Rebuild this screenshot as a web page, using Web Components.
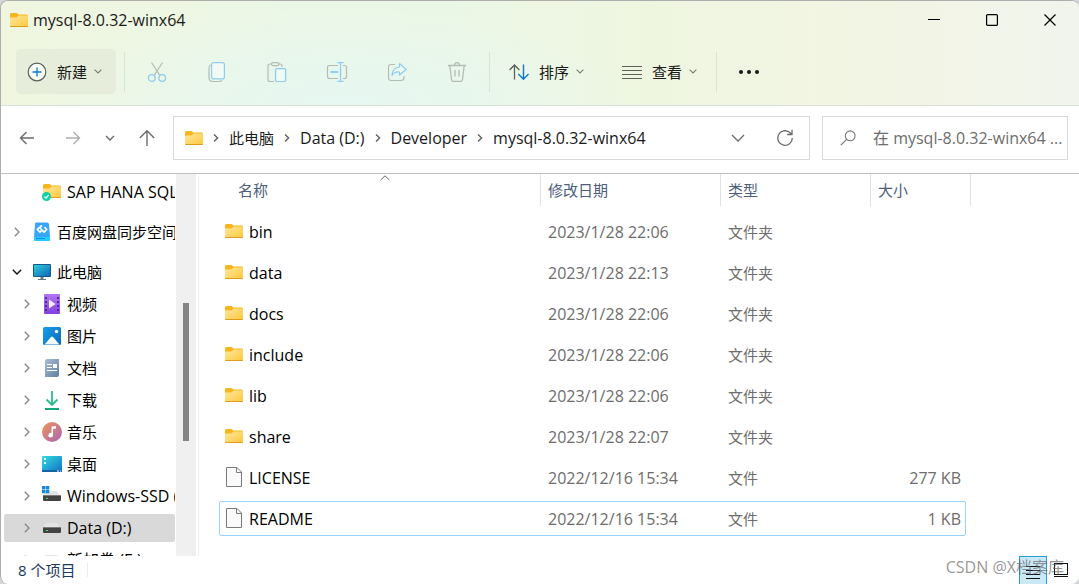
<!DOCTYPE html>
<html lang="zh-CN">
<head>
<meta charset="utf-8">
<title>mysql-8.0.32-winx64</title>
<style>
html, body { margin: 0; height: 100%; }
body {
  background: #d4d6da;
  color: #1a1a1a;
  font: 16px/20px "Open Sans", "Noto Sans CJK SC", sans-serif;
  --cjk: 15px;
  --line: #d9d9d9;
}
</style>
</head>
<body>
<fx-window>
  <fx-title-bar slot="top">mysql-8.0.32-winx64</fx-title-bar>
  <fx-toolbar slot="top">
    <fx-tool-button icon="new" filled>新建</fx-tool-button>
    <fx-separator></fx-separator>
    <fx-icon-group></fx-icon-group>
    <fx-separator></fx-separator>
    <fx-tool-button icon="sort">排序</fx-tool-button>
    <fx-tool-button icon="view">查看</fx-tool-button>
    <fx-separator></fx-separator>
    <fx-more-button></fx-more-button>
  </fx-toolbar>
  <fx-address-row slot="address">
    <fx-crumb>此电脑</fx-crumb>
    <fx-crumb latin>Data (D:)</fx-crumb>
    <fx-crumb latin>Developer</fx-crumb>
    <fx-crumb latin last>mysql-8.0.32-winx64</fx-crumb>
  </fx-address-row>
  <fx-nav-pane slot="nav">
    <fx-nav-item icon="synced" level="2" leaf spaced latin>SAP HANA SQL</fx-nav-item>
    <fx-nav-item icon="baidu" level="1" spaced>百度网盘同步空间</fx-nav-item>
    <fx-nav-item icon="pc" level="1" open>此电脑</fx-nav-item>
    <fx-nav-item icon="video" level="2">视频</fx-nav-item>
    <fx-nav-item icon="picture" level="2">图片</fx-nav-item>
    <fx-nav-item icon="document" level="2">文档</fx-nav-item>
    <fx-nav-item icon="download" level="2">下载</fx-nav-item>
    <fx-nav-item icon="music" level="2">音乐</fx-nav-item>
    <fx-nav-item icon="desktop" level="2">桌面</fx-nav-item>
    <fx-nav-item icon="system" level="2" latin>Windows-SSD (C:)</fx-nav-item>
    <fx-nav-item icon="drive" level="2" latin selected>Data (D:)</fx-nav-item>
    <fx-nav-item icon="drive" level="2" latin>新加卷 (E:)</fx-nav-item>
  </fx-nav-pane>
  <fx-file-list slot="files"></fx-file-list>
  <fx-status-bar slot="status">8 个项目</fx-status-bar>
</fx-window>

<script>
const svg = (w, h, body) =>
  `<svg width="${w}" height="${h}" viewBox="0 0 ${w} ${h}" fill="none" aria-hidden="true">${body}</svg>`;
const folderBody = `
  <defs><linearGradient id="f" x1="0" y1="0" x2="1" y2="1"><stop stop-color="#ffe7a0"/><stop offset="1" stop-color="#fdc93b"/></linearGradient></defs>
  <path d="M0 1.5Q0 0 1.5 0H6.5L8.5 1.500H16.5Q18 1.500 18 3V8H0Z" fill="#f8b51c"/>
  <path d="M0 4.500H6.500L8.500 2.500H17Q18 2.500 18 3.500V13Q18 14 17 14H1Q0 14 0 13Z" fill="url(#f)"/>
  <path d="M0 12.500Q0 14 1 14H17Q18 14 18 12.500Q18 13 17 13H1Q0 13 0 12.500Z" fill="#e09a1c"/>`;
const driveBody = `<path d="M4 5H15L18 10H1Z" fill="#e2e4e6"/><rect x="1" y="9" width="18" height="6" rx="1" fill="#434343"/><rect x="1" y="9" width="18" height="1" fill="#7b7b7b"/><rect x="4" y="12" width="2" height="1" fill="#48e060"/>`;

const ICONS = {
  folder: svg(18, 14, folderBody),
  file: svg(16, 20, `<path d="M.5.5H11L15.500 5V19.500H.5Z" fill="#fafafa" stroke="#7a7a7a"/><path d="M10.500.5V5.500H15.500" stroke="#7a7a7a"/>`),
  new: svg(20, 20, `<circle cx="10" cy="10" r="8.800" fill="#fafcf8" stroke="#5c605a" stroke-width="1.200"/><path d="M10 5.500V14.500M5.500 10H14.500" stroke="#0a7ad0" stroke-width="1.300"/>`),
  cut: svg(20, 20, `<path d="M4.500.5 12.800 13.300M15.500.5 7.200 13.300" stroke="#b5bcb3" stroke-width="1.200"/><circle cx="4.800" cy="16" r="3.300" stroke="#8fcdef" stroke-width="1.300"/><circle cx="15.200" cy="16" r="3.300" stroke="#8fcdef" stroke-width="1.300"/>`),
  copy: svg(20, 20, `<path d="M4 3Q2 3.500 2 6V15.500Q2 19.500 6 19.500H12Q14 19.500 14.800 18" stroke="#b5bcb3" stroke-width="1.200"/><rect x="4.600" y=".6" width="12.800" height="16.300" rx="2" fill="#f0faf6" stroke="#8fcdef" stroke-width="1.200"/>`),
  paste: svg(20, 20, `<path d="M7 19.500H3Q1 19.500 1 17.500V4Q1 2 3 2H13Q15 2 15 4V5" stroke="#b5bcb3" stroke-width="1.200"/><rect x="4.500" y=".6" width="7.500" height="3" rx="1.500" fill="#ebf7ea" stroke="#b5bcb3" stroke-width="1.200"/><rect x="8.600" y="6.600" width="10" height="13" rx="1.500" fill="#f0faf6" stroke="#8fcdef" stroke-width="1.300"/>`),
  rename: svg(22, 20, `<path d="M12 3.500H3.500Q1.500 3.500 1.500 5.500V14.500Q1.500 16.500 3.500 16.500H12M17 3.500H18.500Q20.500 3.500 20.500 5.500V14.500Q20.500 16.500 18.500 16.500H17" stroke="#b5bcb3" stroke-width="1.200"/><path d="M11.500.6H17.500M11.500 19.400H17.500M14.500.6V19.400" stroke="#8fcdef" stroke-width="1.300"/><path d="M4.500 10H12" stroke="#8fcdef" stroke-width="2"/>`),
  share: svg(20, 20, `<path d="M8 2.500H4Q1.500 2.500 1.500 5V15.500Q1.500 18.500 4 18.500H14Q17 18.500 17 15.500V14" stroke="#b5bcb3" stroke-width="1.200"/><path d="M12.500 1.500 19 7.500 12.500 13V10Q7.500 9.500 5 13.500Q5.500 5.500 12.500 5Z" fill="#eef9ef" stroke="#8fcdef" stroke-width="1.200" stroke-linejoin="round"/>`),
  trash: svg(20, 20, `<path d="M1 3.500H19M7.500 3.500Q7.500.7 10 .7T12.500 3.500M2.800 3.500 4.500 17.500Q4.800 19.400 6.500 19.400H13.500Q15.200 19.400 15.500 17.500L17.200 3.500M8 8V14.500M12 8V14.500" stroke="#b5bcb3" stroke-width="1.300"/>`),
  sort: svg(20, 18, `<path d="M5.500 16.500V2M.6 7 5.500 2 10.400 7" stroke="#5c605a" stroke-width="1.300"/><path d="M14.500 1.500V16M9.300 11 14.500 16.200 19.600 11" stroke="#0a7ad0" stroke-width="1.400"/>`),
  view: svg(20, 14, `<path d="M0 1.500H20M0 5.500H20M0 9.500H20M0 13.500H20" stroke="#5c605a"/>`),
  more: svg(20, 4, `<circle cx="2" cy="2" r="2" fill="#1a1a1a"/><circle cx="10" cy="2" r="2" fill="#1a1a1a"/><circle cx="18" cy="2" r="2" fill="#1a1a1a"/>`),
  down: svg(8, 5, `<path d="M.6.6 4 4 7.400.6" stroke="#7a7d77" stroke-width="1.100"/>`),
  min: svg(12, 12, `<path d="M0 5.500H12" stroke="#000"/>`),
  max: svg(12, 12, `<rect x=".6" y=".6" width="10.800" height="10.800" rx="1" stroke="#000" stroke-width="1.200"/>`),
  close: svg(12, 12, `<path d="M.5.5 11.500 11.500M11.500.5.5 11.500" stroke="#000" stroke-width="1.200"/>`),
  back: svg(16, 14, `<path d="M15 7H1.500M7.500 1 1.500 7 7.500 13" stroke="#6a6a6a" stroke-width="1.400"/>`),
  forward: svg(16, 14, `<path d="M1 7H14.500M8.500 1 14.500 7 8.500 13" stroke="#adadad" stroke-width="1.400"/>`),
  recent: svg(10, 6, `<path d="M1 1 5 5 9 1" stroke="#6a6a6a" stroke-width="1.400"/>`),
  up: svg(16, 18, `<path d="M8 17V2M.8 9 8 1.800 15.200 9" stroke="#6a6a6a" stroke-width="1.400"/>`),
  crumb: svg(6, 8, `<path d="M1 .6 4.600 4 1 7.400" stroke="#5f5f5f" stroke-width="1.400"/>`),
  expand: svg(14, 8, `<path d="M1 1 7 7 13 1" stroke="#6a6a6a" stroke-width="1.300"/>`),
  refresh: svg(18, 18, `<path d="M16.300 9A7.300 7.300 0 1 1 13.500 3.300L15.500 5.300M16 .8V5.500H11.200" stroke="#6a6a6a" stroke-width="1.300"/>`),
  search: svg(16, 16, `<circle cx="10.200" cy="5.800" r="4.900" stroke="#767676" stroke-width="1.100"/><path d="M6.700 9.300.8 15.200" stroke="#767676" stroke-width="1.200"/>`),
  caretUp: svg(10, 6, `<path d="M.6 5 5 .8 9.400 5" stroke="#6a6a6a"/>`),
  branch: svg(6, 10, `<path d="M.8.8 5 5 .8 9.200" stroke="#858585" stroke-width="1.300"/>`),
  branchOpen: svg(10, 6, `<path d="M.8.8 5 5 9.200.8" stroke="#1a1a1a" stroke-width="1.500"/>`),
  synced: svg(20, 20, `<g transform="translate(1 2)">${folderBody}</g><circle cx="4.500" cy="14.500" r="4.500" fill="#0fd1a8"/><path d="M2.400 14.500 4 16.100 6.800 13" stroke="#fff" stroke-width="1.200"/>`),
  baidu: svg(20, 20, `<path d="M4 .5H15Q17 .5 17 2.500L18 15H2L3 2.500Q3 .5 4 .5Z" fill="#36a5fb"/><rect x="2" y="15" width="16" height="4" rx="1" fill="#23cbfb"/><rect x="4" y="16" width="9" height="1" fill="#0e89e8"/><path d="M10 3.500 5.200 7.500 8 10.200 10 8.200 12 10.200 14.800 7.500 12.500 5.200M7.500 5.500 12.500 10.500" stroke="#fff" stroke-width="1.700" stroke-linejoin="round"/>`),
  pc: svg(20, 20, `<defs><linearGradient id="g" x1="0" y1="0" x2="1" y2="1"><stop stop-color="#2dccdc"/><stop offset="1" stop-color="#0f67b8"/></linearGradient></defs><path d="M8.500 15H11.500V17H14V18H6V17H8.500Z" fill="#6b7884"/><rect x="1" y="2" width="18" height="13" rx="1" fill="#145b8c"/><rect x="2" y="3" width="16" height="11" fill="url(#g)"/>`),
  video: svg(20, 20, `<defs><linearGradient id="v" x1="0" y1="0" x2="0" y2="1"><stop stop-color="#b377f4"/><stop offset="1" stop-color="#8140df"/></linearGradient></defs><rect x="2" width="16" height="20" rx="1" fill="url(#v)"/><path d="M4 3V18M16 3V18" stroke="#52269c" stroke-width="2" stroke-dasharray="2 2"/><path d="M7 5.500 13.500 10 7 14.500Z" fill="#f5efff"/>`),
  picture: svg(20, 20, `<defs><linearGradient id="p" x1="0" y1="0" x2="1" y2="1"><stop stop-color="#159fe5"/><stop offset="1" stop-color="#0b68bf"/></linearGradient></defs><rect x="1" y="1" width="18" height="18" rx="1.500" fill="url(#p)"/><path d="M2.500 18.500 9 11Q10 10 11 11L17.500 18.500Z" fill="#f4faff"/><circle cx="14.500" cy="5.500" r="1.700" fill="#fff"/>`),
  document: svg(20, 20, `<defs><linearGradient id="d" x1="0" y1="0" x2="1" y2="1"><stop stop-color="#a9bdd2"/><stop offset="1" stop-color="#5f7fa3"/></linearGradient></defs><path d="M3 2Q3 0 5 0H17V16Q17 18 15 18H3Z" fill="url(#d)" transform="translate(0 1)"/><path d="M5 6.500H10M5 9.500H10M5 12.500H15" stroke="#fff" stroke-width="1.200"/><rect x="11" y="6" width="4" height="4" fill="#fff"/>`),
  download: svg(20, 20, `<path d="M10 1V15M4.500 9.500 10 15 15.500 9.500" stroke="#27bd8d" stroke-width="1.800"/><path d="M3 19H17" stroke="#12a87d" stroke-width="1.800"/>`),
  music: svg(20, 20, `<defs><linearGradient id="m" x1="0" y1="0" x2="1" y2="1"><stop stop-color="#f19555"/><stop offset="1" stop-color="#a765b7"/></linearGradient></defs><circle cx="10" cy="10" r="10" fill="url(#m)"/><path d="M9.500 4.500 14 4V6.500L11 7V13A2.300 2.300 0 1 1 9.500 11Z" fill="#fff"/>`),
  desktop: svg(20, 20, `<defs><linearGradient id="k" x1="0" y1="0" x2="1" y2="1"><stop stop-color="#32dce2"/><stop offset="1" stop-color="#1270c4"/></linearGradient></defs><rect y="2" width="20" height="16" rx="1" fill="url(#k)"/><rect y="16" width="20" height="2" fill="#1565a5"/><path d="M2 4H4V6H2ZM2 8H4V10H2Z" fill="#e9ffff"/><path d="M15 17H17M18 17H19" stroke="#fff"/>`),
  system: svg(20, 20, `${driveBody}<path d="M0 0H3.400V3.400H0ZM3.900 0H7.300V3.400H3.900ZM0 3.900H3.400V7.300H0ZM3.900 3.900H7.300V7.300H3.900Z" fill="#1089dc"/>`),
  drive: svg(20, 20, driveBody),
  details: svg(14, 13, `<path d="M0 .5H14M0 4.500H14M0 8.500H14M0 12.500H14" stroke="#111"/>`),
  thumbs: svg(14, 14, `<rect x=".5" y=".5" width="13" height="11" fill="#fff" stroke="#111"/><path d="M0 13.500H14" stroke="#111"/>`)
};

/* Shared base: an open shadow root filled from the class's own markup. */
class FxElement extends HTMLElement {
  constructor() {
    super();
    this.attachShadow({ mode: "open" });
  }
  connectedCallback() {
    this.shadowRoot.innerHTML = `<style>
      :host, * { box-sizing: border-box; }
      svg { display: block; flex: none; }
      button { font: inherit; color: inherit; background: none; border: 0; padding: 0; margin: 0; display: flex; align-items: center; justify-content: center; }
      a { color: inherit; text-decoration: none; }
      ${this.css()}</style>${this.html()}`;
  }
}

class FxWindow extends FxElement {
  css() { return `
    :host { display: block; height: 100vh; }
    .frame { height: 100%; display: grid; grid-template: auto auto minmax(0, 1fr) 28px / 195px minmax(0, 1fr);
      background: #fff; border: 1px solid #adadad; border-width: 1px 0 0 1px; border-radius: 8px; overflow: hidden; }
    header { grid-column: 1 / -1; border-bottom: 1px solid #dae2d8;
      background: radial-gradient(ellipse 300px 100px at 340px 106px, #e6f7f2, rgba(234,247,232,0)),
        linear-gradient(90deg, #f0f6e0 0, #ebf7e6 26%, #ebf7e6 42%, #eff6e0 60%, #f2f5e3 80%, #f1f4ec 100%); }
    .address { grid-column: 1 / -1; border-bottom: 1px solid #bdbdbd; }
    nav, main { min-height: 0; min-width: 0; overflow: hidden; }
    footer { grid-column: 1 / -1; }`; }
  html() { return `<div class="frame">
    <header><slot name="top"></slot></header>
    <div class="address"><slot name="address"></slot></div>
    <nav aria-label="导航"><slot name="nav"></slot></nav>
    <main><slot name="files"></slot></main>
    <footer><slot name="status"></slot></footer></div>`; }
}

class FxTitleBar extends FxElement {
  css() { return `
    :host { display: flex; align-items: center; height: 37px; padding-left: 9px; }
    span { flex: 1; padding-left: 5px; }
    button { width: 58px; height: 36px; }`; }
  html() { return `${ICONS.folder}<span><slot></slot></span>
    <button aria-label="最小化">${ICONS.min}</button>
    <button aria-label="最大化">${ICONS.max}</button>
    <button aria-label="关闭">${ICONS.close}</button>`; }
}

class FxToolbar extends FxElement {
  css() { return `:host { display: flex; align-items: center; height: 67px; padding: 0 7px; }`; }
  html() { return `<slot></slot>`; }
}

class FxSeparator extends FxElement {
  css() { return `:host { display: block; width: 1px; height: 40px; background: #dce3d3; }`; }
  html() { return ``; }
}

class FxToolButton extends FxElement {
  css() { return `
    :host { display: block; font-size: var(--cjk); margin: 0 8px; }
    button { height: 45px; padding: 0 11px; border-radius: 5px; gap: 10px; white-space: nowrap; }
    :host([filled]) button { background: #e6eedb; padding-right: 14px; }
    span { display: flex; align-items: center; gap: 7px; }`; }
  html() { return `<button>${ICONS[this.getAttribute("icon")]}<span><slot></slot>${ICONS.down}</span></button>`; }
}

class FxIconGroup extends FxElement {
  css() { return `:host { display: flex; margin: 0 2px; } button { width: 60px; height: 45px; }`; }
  html() {
    return [["cut", "剪切"], ["copy", "复制"], ["paste", "粘贴"], ["rename", "重命名"], ["share", "共享"], ["trash", "删除"]]
      .map(([icon, label]) => `<button disabled aria-label="${label}">${ICONS[icon]}</button>`).join("");
  }
}

class FxMoreButton extends FxElement {
  css() { return `:host { display: block; margin: 0 8px; } button { width: 48px; height: 45px; }`; }
  html() { return `<button aria-label="查看更多">${ICONS.more}</button>`; }
}

class FxAddressRow extends FxElement {
  css() { return `
    :host { display: flex; align-items: center; height: 67px; padding: 0 11px 4px 7px; }
    .history { display: flex; margin-right: 8px; }
    .history button { width: 37px; height: 36px; }
    .history button:first-child { margin-right: 9px; }
    .box { display: flex; align-items: center; height: 44px; border: 1px solid var(--line); background: #fff; }
    .path { flex: 1; min-width: 0; padding: 0 1px 0 11px; margin-right: 12px; }
    .crumbs { flex: 1; display: flex; align-items: center; min-width: 0; overflow: hidden; }
    .crumbs > svg { margin: 0 10px; }
    .path button { width: 47px; height: 42px; }
    .search { width: 246px; padding-left: 17px; gap: 17px; }
    input { flex: 1; min-width: 0; border: 0; outline: 0; padding: 0; background: none; font: inherit; color: #1a1a1a; text-overflow: ellipsis; }
    input::placeholder { color: #6d6d6d; opacity: 1; }`; }
  html() { return `<div class="history">
      <button aria-label="返回">${ICONS.back}</button>
      <button aria-label="前进" disabled>${ICONS.forward}</button>
      <button aria-label="最近浏览的位置">${ICONS.recent}</button>
      <button aria-label="上移">${ICONS.up}</button></div>
    <div class="box path">${ICONS.folder}<div class="crumbs">${ICONS.crumb}<slot></slot></div>
      <button aria-label="以前的位置">${ICONS.expand}</button>
      <button aria-label="刷新">${ICONS.refresh}</button></div>
    <label class="box search">${ICONS.search}<input type="text" aria-label="搜索" placeholder="在 mysql-8.0.32-winx64 ..."></label>`; }
}

class FxCrumb extends FxElement {
  css() { return `
    :host { display: flex; align-items: center; flex: none; font-size: var(--cjk); }
    :host([latin]) { font-size: inherit; }
    svg { margin: 0 10px; }
    :host([last]) svg { display: none; }`; }
  html() { return `<a href="#"><slot></slot></a>${ICONS.crumb}`; }
}

class FxNavPane extends FxElement {
  css() { return `
    :host { display: flex; height: 100%; }
    .tree { flex: 1; min-width: 0; overflow: hidden; padding: 2px 1px 0 3px; }
    .bar { width: 20px; background: #f0f0f0; display: grid; grid-template-rows: 129fr 138fr 115fr; justify-items: center; }
    .thumb { grid-row: 2; width: 6px; background: #858585; }`; }
  html() { return `<div class="tree"><slot></slot></div><div class="bar"><div class="thumb"></div></div>`; }
}

class FxNavItem extends FxElement {
  css() { return `
    :host { display: block; padding: 2px 0; color: #000; font-size: var(--cjk); }
    :host([latin]) { font-size: inherit; }
    :host([spaced]) { margin-bottom: 8px; }
    .row { display: flex; align-items: center; height: 28px; border-radius: 2px; overflow: hidden; }
    :host([level="2"]) .row { padding-left: 10px; }
    :host([selected]) .row { background: #d9d9d9; }
    button { width: 26px; height: 28px; flex: none; }
    :host([leaf]) button { visibility: hidden; }
    a { display: flex; align-items: center; gap: 5px; padding-left: 2px; white-space: nowrap; }`; }
  html() { return `<div class="row"><button aria-label="展开">${this.hasAttribute("open") ? ICONS.branchOpen : ICONS.branch}</button>
    <a href="#">${ICONS[this.getAttribute("icon")]}<span><slot></slot></span></a></div>`; }
}

class FxFileList extends FxElement {
  css() { return `
    :host { display: block; height: 100%; margin-left: 2px; padding-left: 20px; border-left: 1px solid #f3f3f3; }
    table { table-layout: fixed; width: 752px; border-collapse: collapse; }
    .c1 { width: 322px; } .c2 { width: 180px; } .c3 { width: 150px; } .c4 { width: 100px; }
    th { position: relative; height: 37px; padding: 0 0 5px; text-align: left; font-weight: 400; font-size: var(--cjk); color: #4c607a; }
    th div { height: 32px; padding: 6px 0 0 7px; border-right: 1px solid #e2e2e2; }
    th:first-child div { padding-left: 19px; }
    th svg { position: absolute; left: 161px; top: 1px; }
    td { height: 41px; padding: 0 0 0 7px; color: #6d6d6d; white-space: nowrap; }
    td:first-child { padding-left: 6px; color: #000; }
    td:nth-child(3) { font-size: var(--cjk); }
    td:last-child { text-align: right; padding-right: 10px; }
    .name { display: flex; align-items: center; gap: 6px; }
    .name svg { width: 18px; margin-bottom: 2px; }
    tr.focused { position: relative; }
    tr.focused::after { content: ""; position: absolute; inset: 3px 5px 3px 0; border: 1px solid #99d1ff; border-radius: 2px; pointer-events: none; }`; }
  html() {
    const rows = [
      ["bin", "2023/1/28 22:06"], ["data", "2023/1/28 22:13"], ["docs", "2023/1/28 22:06"],
      ["include", "2023/1/28 22:06"], ["lib", "2023/1/28 22:06"], ["share", "2023/1/28 22:07"],
      ["LICENSE", "2022/12/16 15:34", "277 KB"], ["README", "2022/12/16 15:34", "1 KB"]
    ];
    const body = rows.map(([name, date, size]) => `<tr${name === "README" ? ' class="focused"' : ""}>
      <td><div class="name">${size ? ICONS.file : ICONS.folder}<span>${name}</span></div></td>
      <td>${date}</td><td>${size ? "文件" : "文件夹"}</td><td>${size || ""}</td></tr>`).join("");
    return `<table><colgroup><col class="c1"><col class="c2"><col class="c3"><col class="c4"></colgroup>
      <thead><tr><th aria-sort="ascending"><div>名称</div>${ICONS.caretUp}</th><th><div>修改日期</div></th><th><div>类型</div></th><th><div>大小</div></th></tr></thead>
      <tbody>${body}</tbody></table>`;
  }
}

class FxStatusBar extends FxElement {
  css() { return `
    :host { display: flex; align-items: center; height: 28px; padding: 0 10px 0 17px; position: relative; color: #1e395b; font-size: 15px; }
    .count { flex: 1; display: flex; align-items: center; gap: 12px; }
    .count i { width: 1px; height: 14px; background: #ececec; }
    button { width: 28px; height: 28px; }
    .on { background: #cbe8f6; border: 1px solid #26a0da; border-bottom: 0; }
    .on svg { margin-top: 4px; }
    .thumbs { width: 22px; padding-left: 6px; }
    .mark { position: absolute; right: 15px; top: 1px; font-size: 16px; color: rgba(90,90,90,.65); pointer-events: none; }`; }
  html() { return `<div class="count"><span><slot></slot></span><i></i></div>
    <button class="on" aria-label="详细信息">${ICONS.details}</button>
    <button class="thumbs" aria-label="大缩略图">${ICONS.thumbs}</button>
    <div class="mark">CSDN @X档案库</div>`; }
}

for (const [name, type] of [
  ["fx-window", FxWindow], ["fx-title-bar", FxTitleBar], ["fx-toolbar", FxToolbar], ["fx-separator", FxSeparator],
  ["fx-tool-button", FxToolButton], ["fx-icon-group", FxIconGroup], ["fx-more-button", FxMoreButton],
  ["fx-address-row", FxAddressRow], ["fx-crumb", FxCrumb], ["fx-nav-pane", FxNavPane], ["fx-nav-item", FxNavItem],
  ["fx-file-list", FxFileList], ["fx-status-bar", FxStatusBar]
]) customElements.define(name, type);
</script>
</body>
</html>
